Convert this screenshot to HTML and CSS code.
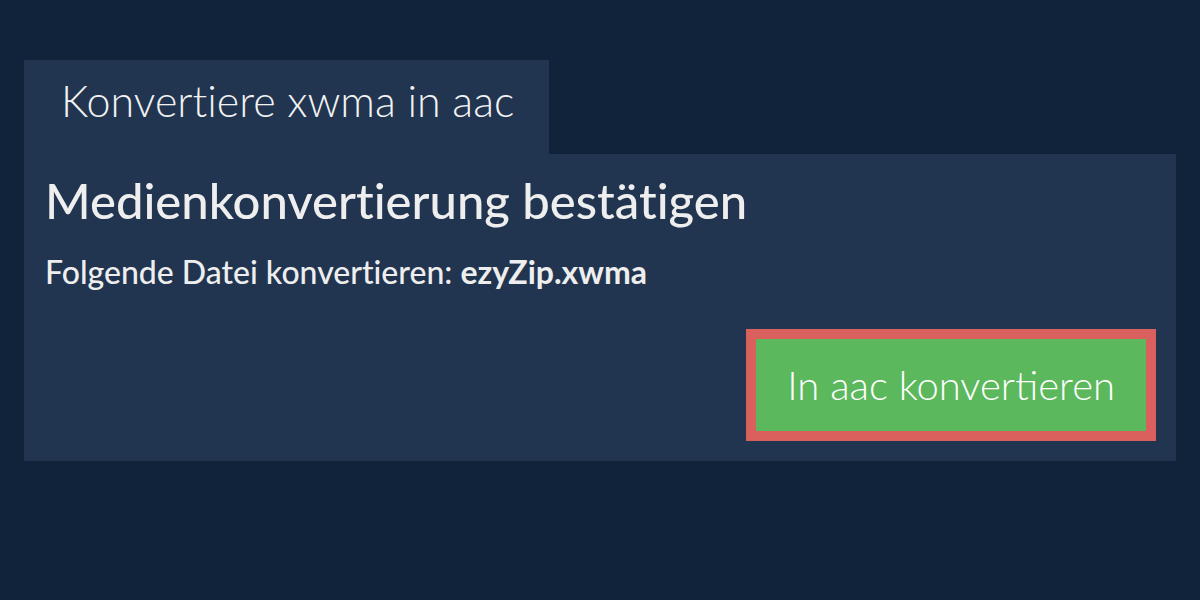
FILE: index.html
```html
<!DOCTYPE html>
<html lang="de">
<head>
    <meta charset="UTF-8">
    <meta name="viewport" content="width=device-width, initial-scale=1.0">
    <title>Konvertiere xwma in aac</title>
    <link rel="stylesheet" href="styles.css">
</head>
<body>

<div class="wrapper">
    <div class="tab-title">Konvertiere xwma in aac</div>

    <div class="panel">
        <h1 class="panel-heading">Medienkonvertierung bestätigen</h1>
        <p class="file-line">Folgende Datei konvertieren: <strong>ezyZip.xwma</strong></p>

        <div class="actions">
            <button class="convert-button">In aac konvertieren</button>
        </div>
    </div>
</div>

</body>
</html>
```

FILE: styles.css
```css
body {
    margin: 0;
    background-color: #11233a;
    font-family: 'Lato', 'Noto Sans', sans-serif;
    font-variant-ligatures: none;
    color: #eeeeee;
}

.wrapper {
    padding: 60px 24px 0 24px;
}

.tab-title {
    display: inline-block;
    background-color: #213550;
    padding: 15px 35px 27px 37px;
    font-size: 43px;
    font-weight: 300;
    line-height: 52px;
    color: #f2f2f2;
}

.panel {
    background-color: #213550;
    padding: 17px 20px 20px 21px;
}

.panel-heading {
    margin: 0;
    font-size: 49px;
    font-weight: 500;
    line-height: 58px;
}

.file-line {
    margin: 24px 0 0 0;
    font-size: 32px;
    font-weight: 500;
    line-height: 38px;
}

.file-line strong {
    font-weight: 700;
}

.actions {
    display: flex;
    justify-content: flex-end;
    margin-top: 38px;
}

.convert-button {
    background-color: #5cb85c;
    border: 10px solid #d9605c;
    color: white;
    font-family: inherit;
    font-size: 40px;
    font-weight: 300;
    line-height: 48px;
    padding: 22px 31px;
    cursor: pointer;
}
```
